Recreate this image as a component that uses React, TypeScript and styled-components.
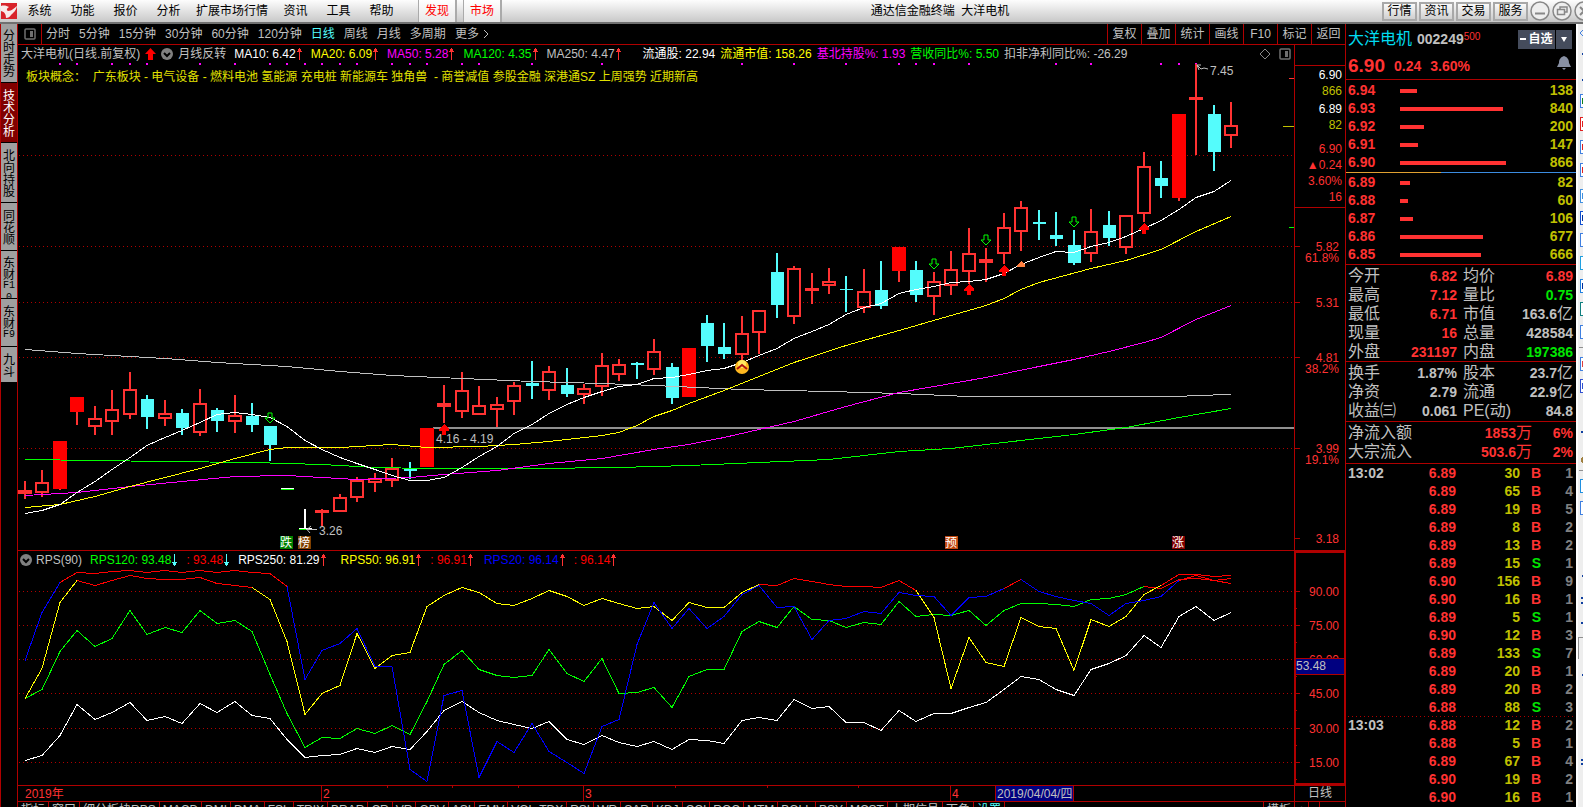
import React from "react";
import styled, { createGlobalStyle } from "styled-components";

const RED = "#b00000";
const UP = "#ff3232";
const DOWN = "#00e600";
const CYAN = "#54fcfc";
const GREY = "#c0c0c0";
const AMBER = "#c0c000";

const GlobalStyle = createGlobalStyle`
  * { box-sizing: border-box; }
  body {
    margin: 0;
    background: #000;
    color: ${GREY};
    font: 12px/16px "Liberation Sans", "Noto Sans CJK SC", sans-serif;
  }
  button {
    margin: 0;
    padding: 0;
    border: 0;
    background: none;
    color: inherit;
    font: inherit;
    white-space: nowrap;
    flex-shrink: 0;
  }
  svg { display: block; flex-shrink: 0; }
  table { border-collapse: collapse; }
  td, th { padding: 0; font-weight: inherit; text-align: left; }
`;

/* ---------- frame ---------- */

const Window = styled.div`
  display: flex;
  flex-direction: column;
  height: 100vh;
  overflow: hidden;
`;

const Workspace = styled.div`
  display: flex;
  flex: 1;
  min-height: 0;
`;

const MainColumn = styled.main`
  display: flex;
  flex: 1;
  flex-direction: column;
  min-width: 0;
`;

/* ---------- menu bar ---------- */

const MenuBar = styled.header`
  display: flex;
  flex-shrink: 0;
  align-items: center;
  height: 24px;
  overflow: hidden;
  color: #000;
  background: linear-gradient(#fdfdfd, #c8c8c8);
  border-bottom: 2px solid #707070;
`;

const Menus = styled.nav`
  display: flex;
  align-items: center;
  padding-left: 1px;
`;

const MenuTabs = styled.div`
  display: flex;
  gap: 6px;
  margin-left: 15px;
`;

const MenuItem = styled.button`
  min-width: 43px;
  height: 22px;
  padding: 0 6px;
`;

const MenuTab = styled.button`
  width: 39px;
  height: 22px;
  color: #f00;
  background: linear-gradient(#fff, #e8e8e8);
  border-left: 1px solid #aaa;
  border-right: 2px solid #aaa;
`;

const AppTitle = styled.div`
  flex: 1;
  padding-right: 4px;
  text-align: center;
  white-space: pre;
`;

const HeaderButtons = styled.div`
  display: flex;
  align-items: center;
  gap: 2px;
  width: 201px;
  flex-shrink: 0;
  overflow: hidden;
`;

const HeaderButton = styled.button`
  width: 35px;
  height: 19px;
  line-height: 15px;
  border: 2px solid #a8a8a8;
  background: linear-gradient(#fafafa, #cfcfcf);
`;

const RoundButton = styled.button`
  width: 20px;
  height: 20px;
`;

/* ---------- left tabs ---------- */

const SideTabs = styled.nav`
  display: flex;
  flex-direction: column;
  flex-shrink: 0;
  width: 18px;
  border-left: 1px solid ${RED};
  border-right: 1px solid ${RED};
`;

const SideTab = styled.button<{ $active?: boolean; $height: number; $long: boolean }>`
  display: flex;
  flex-direction: column;
  align-items: center;
  justify-content: ${(p) => (p.$long ? "flex-start" : "center")};
  height: ${(p) => p.$height}px;
  padding-top: ${(p) => (p.$long ? 5 : 0)}px;
  overflow: hidden;
  line-height: 12px;
  color: ${(p) => (p.$active ? "#fff" : "#000")};
  background: ${(p) => (p.$active ? "#800000" : "#a0a0a0")};
  border-bottom: 1px solid #000;
`;

const SideGlyph = styled.span<{ $latin: boolean }>`
  flex-shrink: 0;
  height: 12px;
  font-family: ${(p) =>
    p.$latin ? '"Liberation Mono", monospace' : '"Noto Sans CJK SC", sans-serif'};
  font-size: ${(p) => (p.$latin ? 10 : 12)}px;
`;

/* ---------- period toolbar ---------- */

const Toolbar = styled.div`
  display: flex;
  flex-shrink: 0;
  align-items: stretch;
  height: 21px;
  border-bottom: 1px solid ${RED};
  border-right: 1px solid ${RED};
`;

const LayoutToggle = styled.button`
  display: flex;
  align-items: center;
  justify-content: center;
  width: 24px;
  border-right: 1px solid ${RED};
`;

const Periods = styled.div`
  display: flex;
  flex: 1;
  gap: 9px;
  padding-left: 4px;
`;

const Period = styled.button<{ $active?: boolean }>`
  display: flex;
  align-items: center;
  gap: 4px;
  color: ${(p) => (p.$active ? CYAN : GREY)};
`;

const Tool = styled.button`
  width: 34px;
  border-left: 1px solid ${RED};
`;

/* ---------- chart panels ---------- */

const Panel = styled.section<{ $grow?: boolean }>`
  display: flex;
  flex: ${(p) => (p.$grow ? "1 1 0" : "0 0 235px")};
  min-height: 0;
  border-bottom: 1px solid ${RED};
`;

const Plot = styled.div`
  position: relative;
  display: flex;
  flex: 1;
  flex-direction: column;
  min-width: 0;
`;

const Canvas = styled.svg`
  flex: 1;
  width: 100%;
  min-height: 0;
  shape-rendering: crispEdges;
`;

const Legend = styled.div<{ $inset: number }>`
  display: flex;
  flex-shrink: 0;
  align-items: center;
  gap: 8px;
  height: 17px;
  padding-left: ${(p) => p.$inset}px;
  white-space: nowrap;
`;

const LegendGroup = styled.div<{ $gap: number; $width?: number }>`
  display: flex;
  align-items: center;
  gap: ${(p) => p.$gap}px;
  min-width: ${(p) => p.$width ?? 0}px;
`;

const LegendItem = styled.span<{ $color: string; $lead?: number }>`
  display: flex;
  align-items: center;
  margin-left: ${(p) => p.$lead ?? 0}px;
  color: ${(p) => p.$color};
  white-space: pre;
`;

const LegendTools = styled.div`
  display: flex;
  gap: 8px;
  margin-left: auto;
  padding-right: 3px;
`;

const Concepts = styled.p`
  position: absolute;
  top: 24px;
  left: 8px;
  margin: 0;
  color: #e0e000;
  white-space: pre;
`;

const Axis = styled.aside`
  display: flex;
  flex-direction: column;
  flex-shrink: 0;
  width: 52px;
  border-left: 1px solid ${RED};
  border-right: 1px solid ${RED};
`;

const BoxedAxis = styled(Axis)`
  border: 2px solid ${RED};
`;

const LastTrade = styled.div`
  display: flex;
  flex-direction: column;
  flex-shrink: 0;
  height: 143px;
  margin-top: 20px;
  padding: 1px 3px 0 0;
  text-align: right;
  border-top: 1px solid ${RED};
  border-bottom: 1px solid ${RED};
`;

const TradeFigure = styled.span<{ $color: string; $lead?: number }>`
  margin-top: ${(p) => p.$lead ?? 0}px;
  color: ${(p) => p.$color};
`;

const DateRow = styled.div`
  display: flex;
  flex-shrink: 0;
  height: 16px;
  border-bottom: 1px solid ${RED};
`;

const PeriodName = styled.div`
  width: 52px;
  line-height: 15px;
  text-align: center;
  border-left: 1px solid ${RED};
  border-right: 1px solid ${RED};
`;

const IndicatorBar = styled.div`
  display: flex;
  flex-shrink: 0;
  height: 16px;
  margin-bottom: -11px;
  border-right: 1px solid ${RED};
`;

const IndicatorTab = styled.button<{ $active?: boolean }>`
  padding: 0 3px;
  color: ${(p) => (p.$active ? CYAN : GREY)};
  border-right: 1px solid ${RED};
`;

const TemplateTabs = styled.div`
  display: flex;
  width: 82px;
  margin-left: auto;
  border-left: 1px solid ${RED};
`;

/* ---------- quote panel ---------- */

const Quote = styled.aside`
  display: flex;
  flex-direction: column;
  flex-shrink: 0;
  width: 230px;
  font-size: 14px;
  font-weight: bold;
`;

const QuoteHead = styled.div`
  height: 56px;
  flex-shrink: 0;
  padding: 5px 4px 0 2px;
  border-bottom: 1px solid ${RED};
`;

const NameRow = styled.div`
  display: flex;
  align-items: center;
  height: 20px;
`;

const StockName = styled.h1`
  margin: 0 5px 0 0;
  color: #00dcf0;
  font-size: 16px;
  font-weight: normal;
`;

const Margin = styled.sup`
  margin-bottom: 4px;
  color: ${UP};
  font-size: 10px;
  font-weight: normal;
  line-height: 12px;
`;

const Watch = styled.div`
  display: flex;
  gap: 1px;
  margin-left: auto;
  color: #fff;
  font-size: 12px;
`;

const WatchButton = styled.button<{ $width: number }>`
  display: flex;
  align-items: center;
  justify-content: center;
  gap: 2px;
  width: ${(p) => p.$width}px;
  height: 19px;
  background: #454c5c;
`;

const PriceRow = styled.div`
  display: flex;
  align-items: center;
  gap: 9px;
  height: 32px;
  padding-top: 2px;
  color: ${UP};
`;

const BigPrice = styled.span`
  font-size: 19px;
`;

const Bell = styled.button`
  margin: 0 1px 6px auto;
`;

const Section = styled.div<{ $pad: number }>`
  flex-shrink: 0;
  padding: 1px 3px ${(p) => p.$pad}px 2px;
  border-bottom: 1px solid ${RED};
`;

const Grid = styled.table<{ $row: number }>`
  width: 100%;
  table-layout: fixed;
  td, th {
    height: ${(p) => p.$row}px;
    padding-top: 1px;
    line-height: ${(p) => p.$row - 1}px;
    vertical-align: middle;
    white-space: nowrap;
  }
`;

const Spread = styled.div`
  height: 1px;
  margin: 1px -3px 0 -2px;
  background: linear-gradient(90deg, #e0a030 95px, #3c8ce0 95px);
`;

const Figure = styled.td<{ $color: string; $left?: boolean }>`
  && { text-align: ${(p) => (p.$left ? "left" : "right")}; }
  color: ${(p) => p.$color};
`;

const Label = styled.th`
  color: ${GREY};
  font-size: 16px;
  font-weight: normal;
`;

const Unit = styled.span`
  font-size: 16px;
  font-weight: normal;
  line-height: 0;
`;

const Depth = styled.span`
  display: block;
  height: 4px;
  background: ${UP};
`;

const TickRow = styled.tr<{ $divided?: boolean }>`
  background: ${(p) =>
    p.$divided
      ? `repeating-linear-gradient(90deg, ${RED} 0 1px, transparent 1px 4px) top / 100% 1px no-repeat`
      : "none"};
`;

const Ticks = styled.div`
  padding: 0 3px 0 2px;
`;

const Strip = styled.aside`
  flex-shrink: 0;
  width: 7px;
  overflow: hidden;
  background: #eee;
  border-left: 2px solid #fff;
`;

/* ---------- data ---------- */

const menus = ["系统", "功能", "报价", "分析", "扩展市场行情", "资讯", "工具", "帮助"];

const sideTabs: { glyphs: string[]; height: number; active?: boolean }[] = [
  { glyphs: ["分", "时", "走", "势"], height: 59 },
  { glyphs: ["技", "术", "分", "析"], height: 60, active: true },
  { glyphs: ["北", "向", "持", "股"], height: 60 },
  { glyphs: ["同", "花", "顺"], height: 48 },
  { glyphs: ["东", "财", "F1", "0"], height: 48 },
  { glyphs: ["东", "财", "F9"], height: 48 },
  { glyphs: ["九", "斗"], height: 36 },
];

const periods = ["分时", "5分钟", "15分钟", "30分钟", "60分钟", "120分钟", "日线", "周线", "月线", "多周期", "更多"];
const tools = ["复权", "叠加", "统计", "画线", "F10", "标记", "返回"];

const indicators = [
  "指标", "窗口", "细分板块RPS", "MACD", "DMI", "DMA", "FSL", "TRIX", "BRAR", "CR", "VR", "OBV", "ASI",
  "EMV", "VOL-TDX", "RSI", "WR", "SAR", "KDJ", "CCI", "ROC", "MTM", "BOLL", "PSY", "MCST", "上期信号", "下角", "设置",
];

const averages: [string, string][] = [
  ["MA10: 6.42", "#fff"],
  ["MA20: 6.09", "#ff0"],
  ["MA50: 5.28", "#f0f"],
  ["MA120: 4.35", "#0f0"],
  ["MA250: 4.47", GREY],
];

const facts: [string, string][] = [
  ["流通股: 22.94", "#fff"],
  ["流通市值: 158.26", "#ff0"],
  ["基北持股%: 1.93", "#f0f"],
  ["营收同比%: 5.50", "#0f0"],
  ["扣非净利同比%: -26.29", GREY],
];

const asks: [string, number][] = [["6.94", 138], ["6.93", 840], ["6.92", 200], ["6.91", 147], ["6.90", 866]];
const bids: [string, number][] = [["6.89", 82], ["6.88", 60], ["6.87", 106], ["6.86", 677], ["6.85", 666]];

type Stat = [string, string, string, string, string, string];
const dayStats: Stat[] = [
  ["今开", "6.82", UP, "均价", "6.89", UP],
  ["最高", "7.12", UP, "量比", "0.75", DOWN],
  ["最低", "6.71", UP, "市值", "163.6亿", GREY],
  ["现量", "16", UP, "总量", "428584", GREY],
  ["外盘", "231197", UP, "内盘", "197386", DOWN],
];
const baseStats: Stat[] = [
  ["换手", "1.87%", GREY, "股本", "23.7亿", GREY],
  ["净资", "2.79", GREY, "流通", "22.9亿", GREY],
  ["收益㈢", "0.061", GREY, "PE(动)", "84.8", GREY],
];

const ticks: [string, number, string, number, string?][] = [
  ["6.89", 30, "B", 1, "13:02"], ["6.89", 65, "B", 4], ["6.89", 19, "B", 5], ["6.89", 8, "B", 2],
  ["6.89", 13, "B", 2], ["6.89", 15, "S", 1], ["6.90", 156, "B", 9], ["6.90", 16, "B", 1],
  ["6.89", 5, "S", 1], ["6.90", 12, "B", 3], ["6.89", 133, "S", 7], ["6.89", 20, "B", 1],
  ["6.89", 20, "B", 2], ["6.88", 88, "S", 3], ["6.88", 12, "B", 2, "13:03"], ["6.88", 5, "B", 1],
  ["6.89", 67, "B", 4], ["6.90", 19, "B", 2], ["6.90", 16, "B", 1],
];

/* Bars: h = hollow rise, f = small filled rise, s = limit-up fill, d = fall;
   values are high, body top, body bottom, low. */
type Bar = [string, number, number, number, number];
const bars: (Bar | null)[] = [
  ["f", 481, 490, 494, 499], ["h", 470, 482, 493, 497], ["s", 441, 441, 489, 490], ["s", 397, 397, 412, 425],
  ["h", 406, 418, 427, 435], ["h", 390, 409, 422, 435], ["h", 372, 389, 415, 419], ["d", 395, 399, 417, 429],
  ["h", 400, 413, 419, 426], ["d", 409, 413, 428, 435], ["h", 389, 403, 433, 436], ["d", 408, 410, 421, 432],
  ["h", 395, 415, 422, 433], ["d", 403, 416, 425, 432], ["d", 426, 426, 445, 461], null,
  null, ["f", 509, 510, 513, 526], ["h", 494, 497, 512, 512], ["h", 477, 480, 498, 502],
  ["h", 473, 478, 483, 492], ["h", 458, 468, 481, 487], ["d", 462, 469, 471, 479], ["s", 428, 428, 467, 467],
  ["f", 385, 403, 407, 423], ["h", 372, 390, 412, 418], ["h", 386, 405, 415, 415], ["h", 397, 404, 410, 427],
  ["h", 382, 385, 402, 415], ["d", 361, 383, 386, 399], ["h", 366, 371, 391, 400], ["d", 368, 385, 394, 397],
  ["h", 384, 388, 395, 404], ["h", 353, 365, 387, 396], ["h", 359, 364, 375, 381], ["d", 362, 363, 365, 379],
  ["h", 339, 351, 370, 375], ["d", 363, 367, 398, 404], ["s", 348, 348, 397, 397], ["d", 315, 323, 346, 362],
  ["d", 323, 347, 354, 359], ["h", 316, 333, 355, 360], ["h", 310, 310, 333, 354], ["d", 253, 272, 305, 318],
  ["h", 266, 268, 317, 324], ["f", 273, 288, 291, 304], ["h", 268, 281, 286, 294], ["d", 276, 289, 290, 312],
  ["h", 269, 291, 308, 313], ["d", 261, 290, 306, 309], ["s", 247, 247, 271, 282], ["d", 261, 270, 295, 302],
  ["h", 272, 281, 297, 315], ["h", 251, 269, 286, 295], ["h", 228, 253, 272, 284], ["f", 248, 259, 263, 282],
  ["h", 213, 227, 254, 264], ["h", 201, 207, 232, 251], ["d", 210, 222, 224, 240], ["d", 212, 235, 239, 246],
  ["d", 230, 245, 263, 265], ["h", 209, 231, 254, 262], ["d", 211, 225, 238, 246], ["h", 215, 215, 248, 254],
  ["h", 152, 166, 214, 222], ["d", 161, 178, 186, 198], ["s", 114, 114, 198, 201], ["f", 64, 97, 100, 155],
  ["d", 105, 114, 152, 171], ["h", 102, 125, 136, 148],
];

type Pt = [number, number];
const ma10: number[] = [
  513, 510, 504, 492, 481, 469, 457, 445, 437, 430, 422, 414, 412, 414, 417, 426, 440, 449, 457, 463, 469, 475,
  480, 480, 477, 467, 456, 446, 433, 424, 413, 404, 397, 391, 386, 384, 378, 377, 374, 370, 368, 362, 355, 348,
  338, 331, 324, 314, 307, 303, 293, 289, 286, 282, 281, 279, 273, 264, 257, 251, 252, 246, 242, 236, 228, 220,
  209, 197, 191, 180,
];
const ma20: Pt[] = [
  [0, 507], [2, 504], [4, 496], [6, 486], [8, 477], [10, 468], [12, 458], [14, 449], [15, 447], [18, 447], [21, 444],
  [23, 447], [26, 446], [28, 444], [30, 441], [33, 435], [34, 432], [35, 425], [36, 416], [37, 410], [38, 403],
  [40, 390], [42, 376], [44, 362], [47, 345], [50, 330], [53, 315], [55, 305], [56, 298], [57, 289], [58, 282],
  [61, 268], [63, 260], [65, 249], [67, 231], [69, 216],
];
const ma50: Pt[] = [
  [0, 495], [3, 492], [6, 486], [9, 481], [12, 476], [15, 475], [19, 479], [22, 477], [24, 474], [27, 470], [30, 463],
  [33, 458], [36, 449], [38, 444], [40, 437], [42, 429], [44, 421], [47, 406], [50, 392], [52, 386], [55, 377],
  [58, 366], [60, 359], [62, 351], [64, 342], [65, 337], [67, 319], [69, 305],
];
const ma120: Pt[] = [
  [0, 459], [8, 461], [13, 462], [17, 464], [20, 467], [23, 468], [29, 468], [34, 467], [38, 465], [42, 462], [46, 459],
  [50, 451], [53, 448], [57, 440], [60, 434], [63, 427], [66, 417], [69, 408],
];
const ma250: Pt[] = [
  [0, 349], [3, 353], [8, 358], [11, 362], [15, 366], [18, 371], [21, 375], [25, 378], [29, 381], [33, 383], [36, 385],
  [41, 389], [46, 391], [50, 393], [54, 396], [66, 396], [67, 395], [69, 394],
];

const signalBars = [2, 3, 5, 6, 7, 10, 12, 14, 15, 16, 17, 18, 19, 21, 22, 23, 25, 26, 29, 33, 41, 44, 47, 50, 51, 52, 54, 59, 61, 65, 66, 67];

/* RPS curves: colour, index of the first bar, then y in thirds of a pixel below the panel's top. */
const rps: [string, number, number[]][] = [
  ["#fff", 0, [661, 646, 585, 493, 538, 515, 485, 541, 529, 550, 488, 517, 482, 525, 533, 598, 652, 646, 643, 625, 637, 619, 628, 573, 510, 482, 516, 541, 552, 565, 544, 596, 611, 586, 605, 619, 604, 626, 596, 599, 608, 539, 532, 539, 476, 505, 499, 547, 547, 569, 509, 544, 520, 520, 502, 487, 446, 409, 418, 446, 466, 388, 370, 344, 284, 322, 227, 197, 241, 217]],
  ["#0f0", 0, [475, 446, 332, 271, 318, 293, 211, 283, 262, 277, 211, 250, 241, 273, 403, 518, 622, 592, 595, 565, 580, 556, 583, 484, 373, 331, 388, 406, 412, 404, 328, 398, 424, 355, 460, 455, 442, 502, 409, 388, 388, 274, 244, 262, 199, 238, 241, 260, 247, 251, 184, 229, 223, 226, 211, 256, 211, 190, 190, 193, 199, 178, 175, 163, 139]],
  ["#f00", 64, [139, 143, 118, 115, 121, 130]],
  ["#ff0", 0, [475, 385, 185, 119]],
  ["#f00", 3, [119, 136, 121, 106, 115, 118, 118, 112, 130, 134, 142]],
  ["#ff0", 13, [142, 176, 304, 521, 460, 436, 280, 385, 346, 337, 199, 164, 142, 157, 189, 194, 175, 151, 169, 194, 175, 190, 205, 199, 241, 187, 202, 202, 157, 133]],
  ["#f00", 42, [133, 136, 115, 124, 133, 139, 139, 142, 121, 150]],
  ["#ff0", 51, [150, 230, 445, 292, 367, 379, 230, 259, 263, 391, 238, 259, 229, 161, 134]],
  ["#f00", 65, [134, 103, 103, 109, 106]],
  ["#00f", 0, [361, 217, 125]],
  ["#f00", 2, [125, 95, 100, 94, 91, 95, 91, 95, 91, 97, 91, 97, 100, 139]],
  ["#00f", 15, [139, 418, 331, 310, 263, 379, 379, 686, 723, 466, 451, 710, 604, 637, 550, 632, 665, 700, 557, 538, 313, 185, 265, 205, 265, 227, 161, 136, 202, 199, 296, 241, 235, 214, 220, 157, 166, 169, 226, 170, 169, 145]],
  ["#f00", 56, [145, 116]],
  ["#00f", 57, [116, 154, 167, 181, 190, 226, 190, 181, 169, 121]],
  ["#f00", 66, [121, 106, 121, 113]],
];

const priceGrid: [number, string, string?][] = [
  [246, "5.82", "61.8%"], [302, "5.31"], [357, "4.81", "38.2%"], [448, "3.99", "19.1%"], [538, "3.18"],
];
const rpsGrid: [number, string][] = [[591, "90.00"], [625, "75.00"], [659, "60.00"], [693, "45.00"], [728, "30.00"], [762, "15.00"]];

const barX = (i: number) => Math.round(25 + i * 17.478);
const path = (points: Pt[]) => points.map(([i, y]) => `${barX(i)},${y + 0.5}`).join(" ");

/* ---------- small drawings ---------- */

const Trend = ({ down }: { down?: boolean }) => (
  <svg width="7" height="14" viewBox="0 0 7 14" shapeRendering="crispEdges" transform={down ? "rotate(180)" : undefined}>
    <path d="M3 1h1v1h1v2h1v1h-5v-1h1v-2h1zM3 5h1v8h-1z" fill={down ? CYAN : UP} />
  </svg>
);

const RoundChevron = () => (
  <svg width="12" height="12" viewBox="0 0 12 12">
    <circle cx="6" cy="6" r="6" fill="#808080" />
    <path d="M3 5l3 3 3-3" fill="none" stroke="#000" strokeWidth="2" />
  </svg>
);

const PanelIcon = () => (
  <svg width="12" height="12" viewBox="0 0 12 12">
    <rect x="1" y="1" width="10" height="10" rx="1" fill="none" stroke="#707070" strokeWidth="1.5" />
    <rect x="6" y="3" width="3" height="6" fill="#707070" />
  </svg>
);

const Logo = () => (
  <svg width="17" height="18" viewBox="0 0 17 18">
    <rect x="1" y="1" width="16" height="16" fill="#d8232a" />
    <path d="M1 4c3-1 6 0 8 1-2 1-3 3-1 4 4 0 6-3 9-5-1 5-4 7-6 9-1 2-3 3-5 3 0-3-1-6-5-7z" fill="#f8eaea" />
  </svg>
);

const UpArrow = ({ x, y }: { x: number; y: number }) => (
  <path d={`M${x} ${y}l5 5v2h-3v4h-4v-4h-3v-2z`} fill="#f00" />
);

const DownArrow = ({ x, y }: { x: number; y: number }) => (
  <path d={`M${x - 2} ${y}h4v5h3l-5 5-5-5h3z`} fill="none" stroke="#0f0" shapeRendering="auto" />
);

const Badge = ({ x, fill, text }: { x: number; fill: string; text: string }) => (
  <>
    <rect x={x} y="536" width="13" height="13" fill={fill} />
    <text x={x + 6} y="547" textAnchor="middle" fill="#fff">{text}</text>
  </>
);

const Candle = ({ i, bar }: { i: number; bar: Bar }) => {
  const [kind, high, top, bottom, low] = bar;
  const x = barX(i);
  const color = kind === "d" ? CYAN : UP;
  return (
    <g fill={color}>
      {top > high && <rect x={x - 1} y={high} width="2" height={top - high} />}
      {low > bottom && <rect x={x - 1} y={bottom} width="2" height={low - bottom} />}
      {kind === "h" && <rect x={x - 6} y={top + 1} width="12" height={bottom - top - 2} fill="none" stroke={UP} strokeWidth="2" />}
      {kind === "f" && <rect x={x - 7} y={top} width="14" height={bottom - top} />}
      {kind === "d" && <rect x={x - 6} y={top} width="13" height={bottom - top} />}
      {kind === "s" && <rect x={x - 7} y={top} width="14" height={bottom - top} fill="#f00" />}
    </g>
  );
};

const GridLine = ({ y }: { y: number }) => (
  <line x1="1" x2="100%" y1={y + 0.5} y2={y + 0.5} stroke={RED} strokeDasharray="1 3" />
);

/* ---------- charts ---------- */

const PriceChart = () => (
  <Canvas role="img" aria-label="日线K线图">
    {[155, 246, 302, 357, 448].map((y) => <GridLine key={y} y={y - 62} />)}
    <line x1="415" x2="100%" y1="366" y2="366" stroke="#909090" strokeWidth="2" />
    <g transform="translate(-18,-62)">
      {signalBars.map((i) => <rect key={i} x={barX(i) - 1} y="63" width="2" height="2" fill="#f0f" />)}
      {bars.map((bar, i) => bar && <Candle key={i} i={i} bar={bar} />)}
      <g fill="none">
        <polyline points={path(ma250)} stroke={GREY} />
        <polyline points={path(ma120)} stroke="#0f0" />
        <polyline points={path(ma50)} stroke="#f0f" />
        <polyline points={path(ma20)} stroke="#ff0" />
        <polyline points={path(ma10.map((y, i): Pt => [i, y]))} stroke="#fff" />
      </g>
      <path d="M281 488h13v1h-13zM299 528h13v1h-13zM304 509h2v20h-2z" fill="#fff" />
      <path d="M281 489h13v1h-13zM299 529h7v1h-7z" fill="#0f0" />
      <path d="M317 529.500H306M311 526l-4 3.500 3 3.500" fill="none" stroke={GREY} shapeRendering="auto" />
      <path d="M1208 69l-4-1-3 1-4-4M1201 65h-4l2 5" fill="none" stroke={GREY} shapeRendering="auto" />
      {[[24, 424], [54, 284], [56, 265], [64, 223]].map(([i, y]) => <UpArrow key={i} x={barX(i)} y={y} />)}
      {[[14, 413], [52, 259], [55, 235], [60, 217]].map(([i, y]) => <DownArrow key={i} x={barX(i)} y={y} />)}
      <path d="M1021 261l4 4v2h-8v-2z" fill="#ff8040" />
      <g shapeRendering="auto">
        <circle cx="742" cy="367" r="7" fill="#ffb820" />
        <circle cx="742" cy="364" r="4" fill="#ffe860" />
        <path d="M737 369l5-4 5 4" fill="none" stroke="#b01010" strokeWidth="2" />
      </g>
      <g fill={GREY}>
        <text x="1210" y="75">7.45</text>
        <text x="319" y="535">3.26</text>
        <text x="436" y="443">4.16 - 4.19</text>
      </g>
      <Badge x={280} fill="#008000" text="跌" />
      <Badge x={298} fill="#804000" text="榜" />
      <Badge x={945} fill="#c04810" text="预" />
      <Badge x={1172} fill="#800000" text="涨" />
    </g>
    <svg x="100%" overflow="visible">
      <path d="M-5 16.500h5" stroke={UP} />
      <path d="M-11 64.500h11" stroke={AMBER} />
      <path d="M-5 165.500h5" stroke="#0f0" />
    </svg>
  </Canvas>
);

const RpsChart = () => (
  <Canvas role="img" aria-label="RPS">
    {rpsGrid.map(([y]) => <GridLine key={y} y={y - 568} />)}
    <g transform="translate(-18,-568)">
      {rps.map(([color, first, ys], n) => (
        <polyline
          key={n}
          points={path(ys.map((v, k): Pt => [first + k, Math.round(540 + v / 3)]))}
          fill="none"
          stroke={color}
        />
      ))}
    </g>
  </Canvas>
);

const PriceScale = () => (
  <Canvas role="img" aria-label="价格坐标">
    <g transform="translate(-1295,-208)" fill={UP}>
      {priceGrid.map(([y, price, ratio]) => (
        <g key={y}>
          <rect x="1295" y={y} width="5" height="1" fill={RED} />
          <text x="1339" y={y + 5} textAnchor="end">{price}</text>
          {ratio && <text x="1339" y={y + 16} textAnchor="end">{ratio}</text>}
        </g>
      ))}
    </g>
  </Canvas>
);

const RpsScale = () => (
  <Canvas role="img" aria-label="RPS坐标">
    <g transform="translate(-1296,-553)" fill={UP}>
      {rpsGrid.map(([y, label]) => (
        <g key={y}>
          <rect x="1295" y={y} width="5" height="1" fill={RED} />
          <rect x="1295" y={y + 17} width="2" height="1" fill={RED} />
          <text x="1339" y={y + 5} textAnchor="end">{label}</text>
        </g>
      ))}
      <rect x="1295" y="658" width="52" height="17" fill={RED} />
      <rect x="1295" y="659" width="52" height="15" fill="#000080" />
      <text x="1296" y="670" fill={GREY}>53.48</text>
    </g>
  </Canvas>
);

const DateScale = () => (
  <Canvas role="img" aria-label="日期坐标">
    <g transform="translate(-18,0)" fill={UP}>
      <text x="25" y="12">2019年</text>
      {([[321, "2"], [583, "3"], [950, "4"]] as [number, string][]).map(([x, month]) => (
        <g key={x}>
          <rect x={x} y="0" width="1" height="15" fill={RED} />
          <text x={x + 2} y="12">{month}</text>
        </g>
      ))}
      {[387, 452, 518, 675, 767, 858].map((x) => <rect key={x} x={x} y="0" width="1" height="2" fill={RED} />)}
      <rect x="995" y="0" width="79" height="15" fill={RED} />
      <rect x="996" y="0" width="77" height="15" fill="#000080" />
      <text x="997" y="12" fill={GREY}>2019/04/04/四</text>
    </g>
  </Canvas>
);

/* ---------- quote pieces ---------- */

const Book = ({ rows }: { rows: [string, number][] }) => (
  <Grid $row={18}>
    <colgroup><col width="52" /><col /><col width="40" /></colgroup>
    <tbody>
      {rows.map(([price, volume]) => (
        <tr key={price}>
          <Figure $color={UP} $left>{price}</Figure>
          <td><Depth style={{ width: Math.max(8, Math.round(volume * 0.1222)) }} /></td>
          <Figure $color={AMBER}>{volume}</Figure>
        </tr>
      ))}
    </tbody>
  </Grid>
);

const Amount = ({ value }: { value: string }) => {
  const unit = value.match(/[亿万]$/)?.[0];
  return unit ? <>{value.slice(0, -1)}<Unit>{unit}</Unit></> : <>{value}</>;
};

const Stats = ({ rows }: { rows: Stat[] }) => (
  <Grid $row={19}>
    <colgroup><col width="52" /><col width="57" /><col width="6" /><col width="48" /><col /></colgroup>
    <tbody>
      {rows.map(([a, av, ac, b, bv, bc]) => (
        <tr key={a}>
          <Label scope="row">{a}</Label>
          <Figure $color={ac}><Amount value={av} /></Figure>
          <td />
          <Label scope="row">{b}</Label>
          <Figure $color={bc}><Amount value={bv} /></Figure>
        </tr>
      ))}
    </tbody>
  </Grid>
);

const stripBoxes: [number, string, string][] = [
  [94, "#4080e0", "#108020"], [117, "#e02020", "#e02020"], [140, "#4080e0", "#e02020"], [163, "#4080e0", "#e02020"],
  [189, "#4090e0", "#4090e0"], [211, "#1050d0", "#0030a0"], [233, "#4080e0", "#fff"], [256, "#20a0e0", "#fff"],
  [279, "#2080e0", "#0030a0"], [302, "#108080", "#fff"], [325, "#4080e0", "#fff"], [357, "#4080e0", "#e04040"],
  [379, "#3050d0", "#3050d0"], [479, "#2090e0", "#fff"], [501, "#4080e0", "#fff"],
];

const StripIcons = () => (
  <svg width="5" height="783" shapeRendering="crispEdges">
    <g transform="translate(0,-24)">
      <path d="M6 29l-4 4 4 4" fill="none" stroke="#4080e0" />
      {stripBoxes.map(([y, stroke, fill]) => (
        <g key={y}>
          <rect x="2.500" y={y + 0.5} width="12" height="13" fill="#fff" stroke={stroke} />
          <rect x="4" y={y + 4} width="1" height="6" fill={fill} />
        </g>
      ))}
      <path d="M1 347h4M1 470h4" stroke="#909090" />
      <path d="M4 54h1M4 80h1M3 432h2M4 576h1M3 598h2M3 603h2M3 623h2M4 675h1M3 760h2M3 764h2" stroke="#1040a0" strokeWidth="2" />
      <circle cx="6" cy="460" r="3" fill="#a08040" />
      <path d="M5 637.500h-5v21" fill="none" stroke="#909090" />
    </g>
  </svg>
);

export default function App() {
  return (
    <Window>
      <GlobalStyle />
      <MenuBar>
        <Logo />
        <Menus>
          {menus.map((m) => <MenuItem key={m}>{m}</MenuItem>)}
          <MenuTabs>
            <MenuTab>发现</MenuTab>
            <MenuTab>市场</MenuTab>
          </MenuTabs>
        </Menus>
        <AppTitle>通达信金融终端  大洋电机</AppTitle>
        <HeaderButtons>
          {["行情", "资讯", "交易", "服务"].map((b) => <HeaderButton key={b}>{b}</HeaderButton>)}
          <RoundButton aria-label="最小化">
            <svg width="20" height="20" viewBox="0 0 20 20" fill="none" stroke="#888">
              <circle cx="10" cy="10" r="9" strokeWidth="1.500" fill="#eee" />
              <path d="M5 12.500h10" strokeWidth="2" />
            </svg>
          </RoundButton>
          <RoundButton aria-label="还原">
            <svg width="20" height="20" viewBox="0 0 20 20" fill="none" stroke="#888">
              <circle cx="10" cy="10" r="9" strokeWidth="1.500" fill="#eee" />
              <path d="M8 8V6h7v5h-2M5.500 8.500h7v5h-7z" strokeWidth="1.500" />
            </svg>
          </RoundButton>
          <RoundButton aria-label="关闭">
            <svg width="20" height="20" viewBox="0 0 20 20" fill="none" stroke="#888">
              <circle cx="10" cy="10" r="9" strokeWidth="1.500" fill="#eee" />
              <path d="M6 6l8 8M14 6l-8 8" strokeWidth="2" />
            </svg>
          </RoundButton>
        </HeaderButtons>
      </MenuBar>

      <Workspace>
        <SideTabs>
          {sideTabs.map((tab) => (
            <SideTab
              key={tab.glyphs.join("")}
              $active={tab.active}
              $height={tab.height}
              $long={tab.glyphs.length * 12 >= tab.height}
            >
              {tab.glyphs.map((g, i) => <SideGlyph key={i} $latin={/\w/.test(g)}>{g}</SideGlyph>)}
            </SideTab>
          ))}
        </SideTabs>

        <MainColumn>
          <Toolbar>
            <LayoutToggle aria-label="布局"><PanelIcon /></LayoutToggle>
            <Periods>
              {periods.map((p) => (
                <Period key={p} $active={p === "日线"}>
                  {p}
                  {p === "更多" && (
                    <svg width="6" height="10" viewBox="0 0 6 10"><path d="M1 1l4 4-4 4" fill="none" stroke={GREY} /></svg>
                  )}
                </Period>
              ))}
            </Periods>
            {tools.map((t) => <Tool key={t}>{t}</Tool>)}
          </Toolbar>

          <Panel $grow>
            <Plot>
              <Legend $inset={3}>
                <LegendGroup $gap={5} $width={202}>
                  <span>大洋电机(日线.前复权)</span>
                  <svg width="11" height="12" viewBox="0 0 11 12"><path d="M5.500 0l5.500 6h-3v6h-5v-6h-3z" fill="#f00" /></svg>
                  <RoundChevron />
                  <span>月线反转</span>
                </LegendGroup>
                {averages.map(([text, color]) => (
                  <LegendItem key={text} $color={color}>{text}<Trend /></LegendItem>
                ))}
                <LegendItem $color="#fff" $lead={13}>
                  <LegendGroup $gap={5}>
                    {facts.map(([text, color]) => <LegendItem key={text} $color={color}>{text}</LegendItem>)}
                  </LegendGroup>
                </LegendItem>
                <LegendTools>
                  <svg width="12" height="12" viewBox="0 0 12 12"><path d="M6 1l5 5-5 5-5-5z" fill="none" stroke="#888" /></svg>
                  <PanelIcon />
                </LegendTools>
              </Legend>
              <PriceChart />
              <Concepts>板块概念：  广东板块 - 电气设备 - 燃料电池 氢能源 充电桩 新能源车 独角兽  - 商誉减值 参股金融 深港通SZ 上周强势 近期新高</Concepts>
            </Plot>
            <Axis>
              <LastTrade>
                <TradeFigure $color="#fff">6.90</TradeFigure>
                <TradeFigure $color={AMBER}>866</TradeFigure>
                <TradeFigure $color="#fff" $lead={2}>6.89</TradeFigure>
                <TradeFigure $color={AMBER}>82</TradeFigure>
                <TradeFigure $color={UP} $lead={8}>6.90</TradeFigure>
                <TradeFigure $color={UP}>▲0.24</TradeFigure>
                <TradeFigure $color={UP}>3.60%</TradeFigure>
                <TradeFigure $color={UP}>16</TradeFigure>
              </LastTrade>
              <PriceScale />
            </Axis>
          </Panel>

          <Panel>
            <Plot>
              <Legend $inset={2}>
                <LegendGroup $gap={4}><RoundChevron /><span>RPS(90)</span></LegendGroup>
                <LegendItem $color="#0f0">RPS120: 93.48<Trend down /></LegendItem>
                <LegendItem $color="#f00">: 93.48<Trend down /></LegendItem>
                <LegendItem $color="#fff">RPS250: 81.29<Trend /></LegendItem>
                <LegendItem $color="#ff0" $lead={6}>RPS50: 96.91<Trend /></LegendItem>
                <LegendItem $color="#f00">: 96.91<Trend /></LegendItem>
                <LegendItem $color="#00f" $lead={2}>RPS20: 96.14<Trend /></LegendItem>
                <LegendItem $color="#f00">: 96.14<Trend /></LegendItem>
              </Legend>
              <RpsChart />
            </Plot>
            <BoxedAxis><RpsScale /></BoxedAxis>
          </Panel>

          <DateRow>
            <Plot><DateScale /></Plot>
            <PeriodName>日线</PeriodName>
          </DateRow>
          <IndicatorBar>
            {indicators.map((t) => <IndicatorTab key={t} $active={t === "设置"}>{t}</IndicatorTab>)}
            <TemplateTabs>
              <IndicatorTab>模板</IndicatorTab>
              <IndicatorTab>+</IndicatorTab>
              <IndicatorTab>-</IndicatorTab>
            </TemplateTabs>
          </IndicatorBar>
        </MainColumn>

        <Quote>
          <QuoteHead>
            <NameRow>
              <StockName>大洋电机</StockName>
              002249<Margin>500</Margin>
              <Watch>
                <WatchButton $width={37}>
                  <svg width="6" height="2" viewBox="0 0 6 2"><path d="M0 1h6" stroke="#fff" strokeWidth="2" /></svg>
                  自选
                </WatchButton>
                <WatchButton $width={16} aria-label="更多自选">
                  <svg width="6" height="5" viewBox="0 0 6 5"><path d="M0 0h6l-3 5z" fill="#fff" /></svg>
                </WatchButton>
              </Watch>
            </NameRow>
            <PriceRow>
              <BigPrice>6.90</BigPrice>
              <span>0.24</span>
              <span>3.60%</span>
              <Bell aria-label="预警">
                <svg width="14" height="14" viewBox="0 0 14 14">
                  <path d="M7 0c3 1 5 3 5 7l2 4h-14l2-4c0-4 2-6 5-7zM5 12h4l-2 2z" fill="#8890a4" />
                </svg>
              </Bell>
            </PriceRow>
          </QuoteHead>
          <Section $pad={1}>
            <Book rows={asks} />
            <Spread />
            <Book rows={bids} />
          </Section>
          <Section $pad={0}><Stats rows={dayStats} /></Section>
          <Section $pad={1}><Stats rows={baseStats} /></Section>
          <Section $pad={2}>
            <Grid $row={19}>
              <colgroup><col width="90" /><col width="94" /><col /></colgroup>
              <tbody>
                <tr><Label scope="row">净流入额</Label><Figure $color={UP}><Amount value="1853万" /></Figure><Figure $color={UP}>6%</Figure></tr>
                <tr><Label scope="row">大宗流入</Label><Figure $color={UP}><Amount value="503.6万" /></Figure><Figure $color={UP}>2%</Figure></tr>
              </tbody>
            </Grid>
          </Section>
          <Ticks>
            <Grid $row={18}>
              <colgroup><col width="60" /><col width="48" /><col width="64" /><col width="21" /><col /></colgroup>
              <tbody>
                {ticks.map(([price, volume, side, count, time], i) => (
                  <TickRow key={i} $divided={i > 0 && !!time}>
                    <Figure $color={GREY} $left>{time}</Figure>
                    <Figure $color={UP}>{price}</Figure>
                    <Figure $color={AMBER}>{volume}</Figure>
                    <Figure $color={side === "B" ? UP : DOWN}>{side}</Figure>
                    <Figure $color="#808080">{count}</Figure>
                  </TickRow>
                ))}
              </tbody>
            </Grid>
          </Ticks>
        </Quote>
        <Strip><StripIcons /></Strip>
      </Workspace>
    </Window>
  );
}
